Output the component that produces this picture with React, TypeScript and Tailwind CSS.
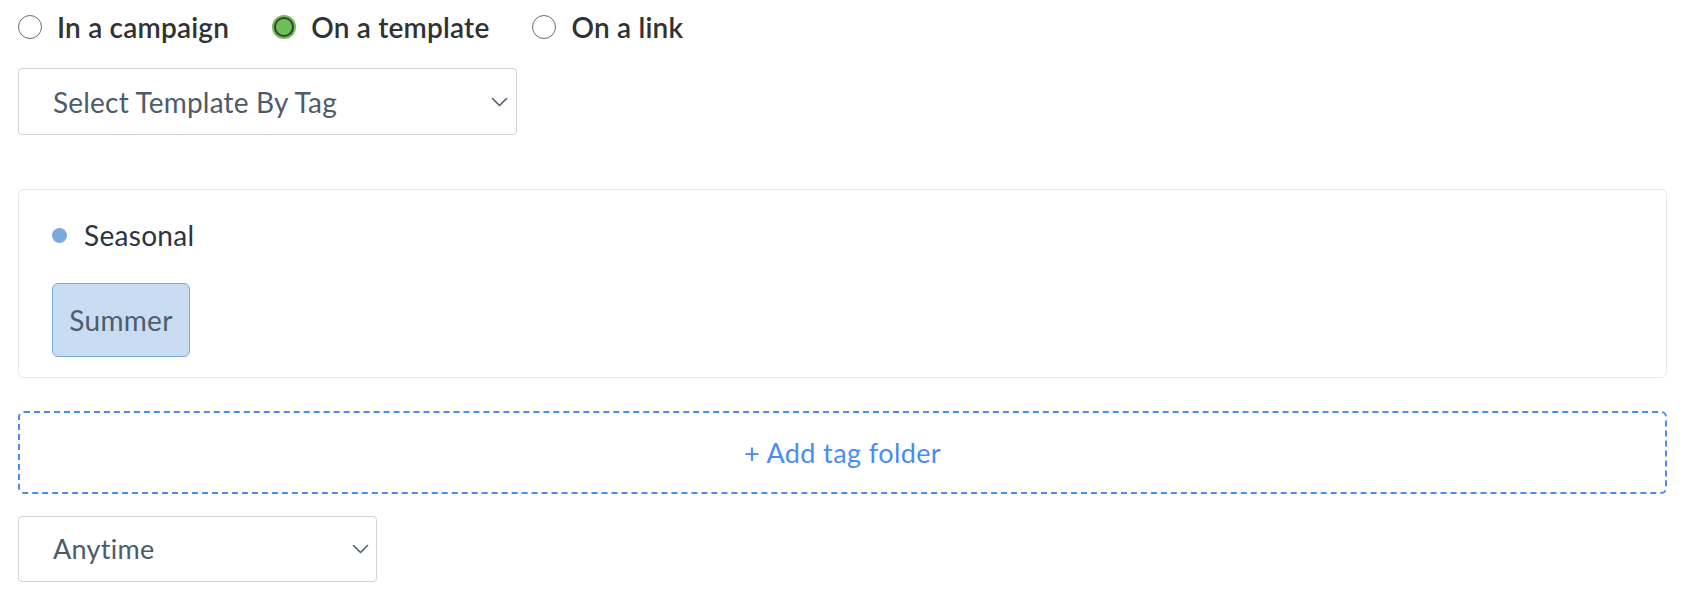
import { useState } from "react";

const font = { fontFamily: "Lato, 'Open Sans', sans-serif" };

function Chevron() {
	return (
		<svg width="17" height="10" viewBox="0 0 17 10" fill="none" className="shrink-0">
			<path d="M1.5 1.5 L8.5 8.5 L15.5 1.5" stroke="#4f5d6e" strokeWidth="1.6" strokeLinecap="round" strokeLinejoin="round" />
		</svg>
	);
}

function Radio({ label, checked, onClick }: { label: string; checked: boolean; onClick: () => void }) {
	return (
		// biome-ignore lint/a11y/useButtonType: <explanation>
		<button onClick={onClick} className="flex h-6 items-center gap-[15px]">
			{checked ? (
				<span className="flex h-6 w-6 items-center justify-center rounded-full bg-[#6cbf52]">
					<span className="h-5 w-5 rounded-full border-2 border-[#3a3d3f] bg-[#6cbf52]" />
				</span>
			) : (
				<span className="h-6 w-6 rounded-full border-[1.5px] border-[#6b6b6b] bg-white" />
			)}
			<span className="text-[28px] leading-6 font-semibold tracking-[0.2px] text-[#303234]">{label}</span>
		</button>
	);
}

export default function App() {
	const [target, setTarget] = useState("template");

	return (
		<main style={font} className="min-h-screen bg-white pl-[18px] pr-[23px] pt-[15px]">
			<div className="flex items-center gap-[43px]">
				<Radio label="In a campaign" checked={target === "campaign"} onClick={() => setTarget("campaign")} />
				<Radio label="On a template" checked={target === "template"} onClick={() => setTarget("template")} />
				<Radio label="On a link" checked={target === "link"} onClick={() => setTarget("link")} />
			</div>

			<div className="mt-[29px] flex h-[67px] w-[499px] items-center justify-between rounded-[4px] border-[1.5px] border-[#cfd3d8] pl-[34px] pr-[8px]">
				<span className="text-[28px] leading-8 tracking-[0.2px] text-[#4d5b6c]">Select Template By Tag</span>
				<Chevron />
			</div>

			<div className="mt-[54px] h-[189px] rounded-[6px] border-[1.5px] border-[#e7e7ec] pl-[33px] pt-[31px]">
				<div className="flex h-7 items-center gap-[17px]">
					<span className="h-[15px] w-[15px] rounded-full bg-[#79a9de]" />
					<span className="text-[28px] leading-7 tracking-[0.3px] text-[#2b3440]">Seasonal</span>
				</div>
				<div className="mt-[34px] flex h-[74px] w-[138px] items-center justify-center rounded-[6px] border-[1.5px] border-[#7ba8de] bg-[#c9ddf2] text-[28px] leading-7 tracking-[0.3px] text-[#4e5c6d]">
					Summer
				</div>
			</div>

			<div className="mt-[33px] flex h-[83px] items-center justify-center rounded-[6px] border-2 border-dashed border-[#4a8cf5] text-[27px] leading-7 tracking-[0.4px] text-[#4a8cf5]">
				+ Add tag folder
			</div>

			<div className="mt-[22px] flex h-[66px] w-[359px] items-center justify-between rounded-[4px] border-[1.5px] border-[#cfd3d8] pl-[34px] pr-[7px]">
				<span className="text-[27px] leading-8 tracking-[0.3px] text-[#4d5b6c]">Anytime</span>
				<Chevron />
			</div>
		</main>
	);
}
